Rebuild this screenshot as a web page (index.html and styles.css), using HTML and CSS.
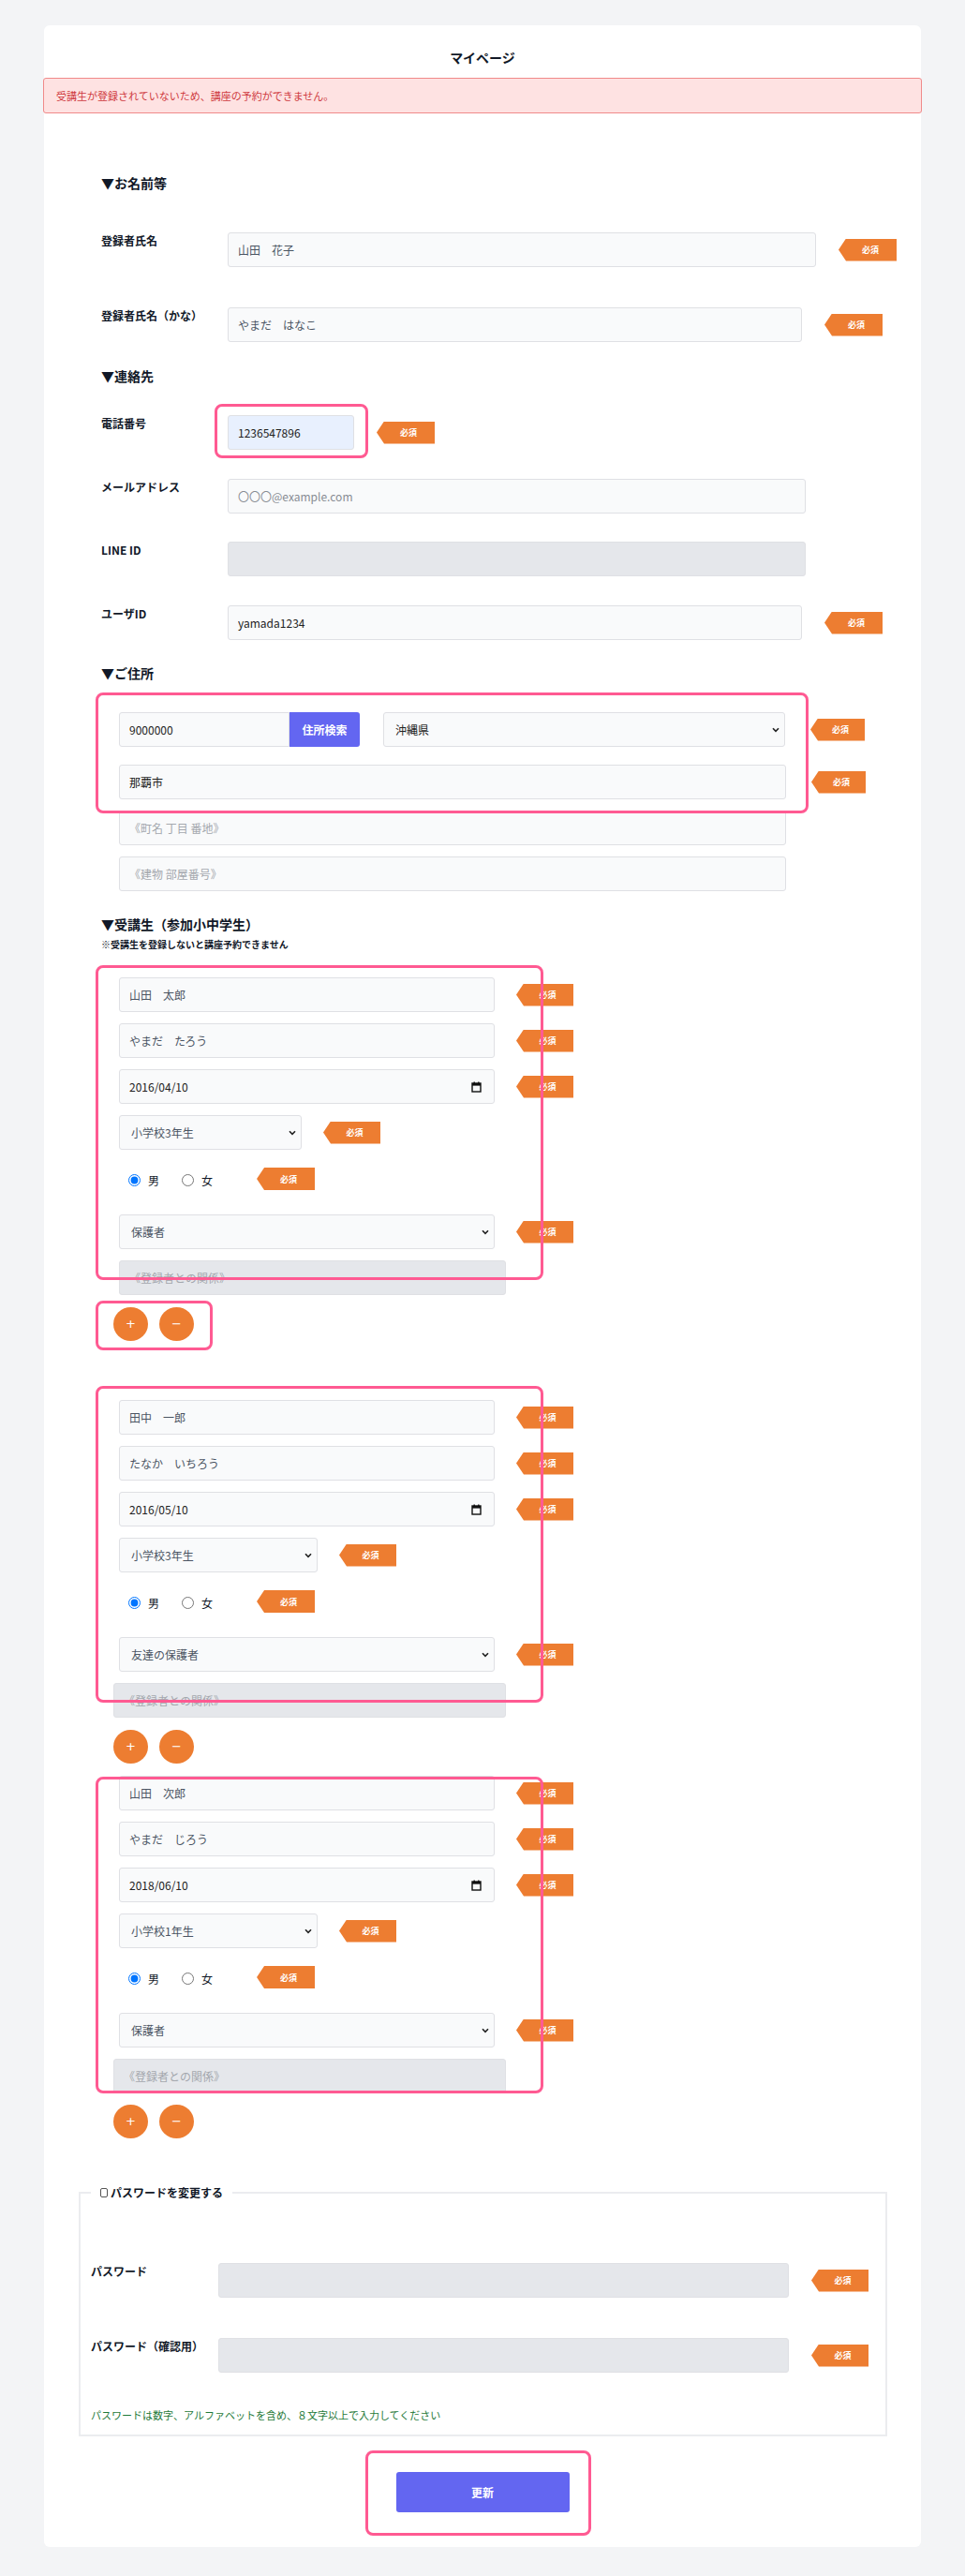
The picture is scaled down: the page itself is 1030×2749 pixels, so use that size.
FILE: index.html
```html
<!DOCTYPE html>
<html lang="ja">
<head>
<meta charset="utf-8">
<title>マイページ</title>
<link rel="stylesheet" href="styles.css">
</head>
<body>
<div class="card">
  <h1 class="title">マイページ</h1>
  <div class="alert">受講生が登録されていないため、講座の予約ができません。</div>

  <div class="form">
    <h2 class="h h-name">▼お名前等</h2>
    <div class="row mt43">
      <label class="lbl">登録者氏名</label>
      <input class="inp w628" value="山田　花子">
      <span class="badge">必須</span>
    </div>
    <div class="row mt43">
      <label class="lbl">登録者氏名（かな）</label>
      <input class="inp w613" value="やまだ　はなこ">
      <span class="badge">必須</span>
    </div>

    <h2 class="h mt26">▼連絡先</h2>
    <div class="row mt32">
      <label class="lbl">電話番号</label>
      <div class="hl-wrap">
        <input class="inp auto w135 dark" value="1236547896">
        <div class="hl hl-phone"></div>
      </div>
      <span class="badge">必須</span>
    </div>
    <div class="row mt31">
      <label class="lbl">メールアドレス</label>
      <input class="inp w617 muted" value="〇〇〇@example.com">
    </div>
    <div class="row mt30">
      <label class="lbl">LINE ID</label>
      <input class="inp gray w617" disabled>
    </div>
    <div class="row mt31">
      <label class="lbl">ユーザID</label>
      <input class="inp w613 dark" value="yamada1234">
      <span class="badge">必須</span>
    </div>

    <h2 class="h mt25">▼ご住所</h2>
    <div class="addr">
      <div class="hl hl-addr"></div>
      <div class="arow">
        <input class="inp zip dark" value="9000000">
        <button class="zipbtn" type="button">住所検索</button>
        <div class="sel-wrap w429 ml25">
          <select class="inp sel dark"><option>沖縄県</option></select>
          <svg class="chev" width="8" height="6" viewBox="0 0 8 6"><path d="M1 1.2 4 4.4 7 1.2" fill="none" stroke="#222" stroke-width="1.6"/></svg>
        </div>
        <span class="badge b58 ml27">必須</span>
      </div>
      <div class="arow mt19">
        <input class="inp w712 dark" value="那覇市">
        <span class="badge b58 ml27">必須</span>
      </div>
      <input class="inp w712 mt12" placeholder="《町名 丁目 番地》">
      <input class="inp w712 mt12" placeholder="《建物 部屋番号》">
    </div>

    <h2 class="h h-stu">▼受講生（参加小中学生）</h2>
    <p class="note">※受講生を登録しないと講座予約できません</p>

    <!-- student 1 -->
    <div class="stu mt27">
      <div class="hl hl-s1"></div>
      <div class="srow">
        <input class="inp w401" value="山田　太郎">
        <span class="badge sb">必須</span>
      </div>
      <div class="srow mt12">
        <input class="inp w401" value="やまだ　たろう">
        <span class="badge sb">必須</span>
      </div>
      <div class="srow mt12">
        <div class="inp date w401"><span>2016/04/10</span>
          <svg class="cal" width="11" height="12" viewBox="0 0 11 12"><rect x="1" y="2" width="9" height="9" fill="none" stroke="#111" stroke-width="1.4"/><rect x="1" y="2" width="9" height="2.6" fill="#111"/><rect x="2.5" y="0.5" width="1.4" height="2" fill="#111"/><rect x="7.1" y="0.5" width="1.4" height="2" fill="#111"/></svg>
        </div>
        <span class="badge sb">必須</span>
      </div>
      <div class="srow mt12">
        <div class="sel-wrap w195">
          <select class="inp sel"><option>小学校3年生</option></select>
          <svg class="chev" width="8" height="6" viewBox="0 0 8 6"><path d="M1 1.2 4 4.4 7 1.2" fill="none" stroke="#222" stroke-width="1.6"/></svg>
        </div>
        <span class="badge sb">必須</span>
      </div>
      <div class="radios">
        <input type="radio" name="g1" checked><span class="rl">男</span>
        <input type="radio" name="g1" class="r2"><span class="rl">女</span>
        <span class="badge rb">必須</span>
      </div>
      <div class="srow mt26">
        <div class="sel-wrap w401">
          <select class="inp sel"><option>保護者</option></select>
          <svg class="chev" width="8" height="6" viewBox="0 0 8 6"><path d="M1 1.2 4 4.4 7 1.2" fill="none" stroke="#222" stroke-width="1.6"/></svg>
        </div>
        <span class="badge sb">必須</span>
      </div>
      <input class="inp gray rel1 mt12" placeholder="《登録者との関係》" disabled>
    </div>
    <div class="pm mt13">
      <div class="hl hl-pm"></div>
      <button class="circ" type="button">+</button>
      <button class="circ" type="button">−</button>
    </div>

    <!-- student 2 -->
    <div class="stu mt63">
      <div class="hl hl-s2"></div>
      <div class="srow">
        <input class="inp w401" value="田中　一郎">
        <span class="badge sb">必須</span>
      </div>
      <div class="srow mt12">
        <input class="inp w401" value="たなか　いちろう">
        <span class="badge sb">必須</span>
      </div>
      <div class="srow mt12">
        <div class="inp date w401"><span>2016/05/10</span>
          <svg class="cal" width="11" height="12" viewBox="0 0 11 12"><rect x="1" y="2" width="9" height="9" fill="none" stroke="#111" stroke-width="1.4"/><rect x="1" y="2" width="9" height="2.6" fill="#111"/><rect x="2.5" y="0.5" width="1.4" height="2" fill="#111"/><rect x="7.1" y="0.5" width="1.4" height="2" fill="#111"/></svg>
        </div>
        <span class="badge sb">必須</span>
      </div>
      <div class="srow mt12">
        <div class="sel-wrap w212">
          <select class="inp sel"><option>小学校3年生</option></select>
          <svg class="chev" width="8" height="6" viewBox="0 0 8 6"><path d="M1 1.2 4 4.4 7 1.2" fill="none" stroke="#222" stroke-width="1.6"/></svg>
        </div>
        <span class="badge sb">必須</span>
      </div>
      <div class="radios">
        <input type="radio" name="g2" checked><span class="rl">男</span>
        <input type="radio" name="g2" class="r2"><span class="rl">女</span>
        <span class="badge rb">必須</span>
      </div>
      <div class="srow mt26">
        <div class="sel-wrap w401">
          <select class="inp sel"><option>友達の保護者</option></select>
          <svg class="chev" width="8" height="6" viewBox="0 0 8 6"><path d="M1 1.2 4 4.4 7 1.2" fill="none" stroke="#222" stroke-width="1.6"/></svg>
        </div>
        <span class="badge sb">必須</span>
      </div>
      <input class="inp gray rel2 mt12" placeholder="《登録者との関係》" disabled>
    </div>
    <div class="pm mt13">
      <button class="circ" type="button">+</button>
      <button class="circ" type="button">−</button>
    </div>

    <!-- student 3 -->
    <div class="stu mt13">
      <div class="hl hl-s3"></div>
      <div class="srow">
        <input class="inp w401" value="山田　次郎">
        <span class="badge sb">必須</span>
      </div>
      <div class="srow mt12">
        <input class="inp w401" value="やまだ　じろう">
        <span class="badge sb">必須</span>
      </div>
      <div class="srow mt12">
        <div class="inp date w401"><span>2018/06/10</span>
          <svg class="cal" width="11" height="12" viewBox="0 0 11 12"><rect x="1" y="2" width="9" height="9" fill="none" stroke="#111" stroke-width="1.4"/><rect x="1" y="2" width="9" height="2.6" fill="#111"/><rect x="2.5" y="0.5" width="1.4" height="2" fill="#111"/><rect x="7.1" y="0.5" width="1.4" height="2" fill="#111"/></svg>
        </div>
        <span class="badge sb">必須</span>
      </div>
      <div class="srow mt12">
        <div class="sel-wrap w212">
          <select class="inp sel"><option>小学校1年生</option></select>
          <svg class="chev" width="8" height="6" viewBox="0 0 8 6"><path d="M1 1.2 4 4.4 7 1.2" fill="none" stroke="#222" stroke-width="1.6"/></svg>
        </div>
        <span class="badge sb">必須</span>
      </div>
      <div class="radios">
        <input type="radio" name="g3" checked><span class="rl">男</span>
        <input type="radio" name="g3" class="r2"><span class="rl">女</span>
        <span class="badge rb">必須</span>
      </div>
      <div class="srow mt26">
        <div class="sel-wrap w401">
          <select class="inp sel"><option>保護者</option></select>
          <svg class="chev" width="8" height="6" viewBox="0 0 8 6"><path d="M1 1.2 4 4.4 7 1.2" fill="none" stroke="#222" stroke-width="1.6"/></svg>
        </div>
        <span class="badge sb">必須</span>
      </div>
      <input class="inp gray rel2 mt12" placeholder="《登録者との関係》" disabled>
    </div>
    <div class="pm mt12">
      <button class="circ" type="button">+</button>
      <button class="circ" type="button">−</button>
    </div>

    <fieldset class="pw">
      <legend class="pw-legend"><span class="chk"></span>パスワードを変更する</legend>
      <div class="row pwrow">
        <label class="lbl l136">パスワード</label>
        <input class="inp gray w609" type="password" disabled>
        <span class="badge b61">必須</span>
      </div>
      <div class="row mt43">
        <label class="lbl l136">パスワード（確認用）</label>
        <input class="inp gray w609" type="password" disabled>
        <span class="badge b61">必須</span>
      </div>
      <p class="hint">パスワードは数字、アルファベットを含め、８文字以上で入力してください</p>
    </fieldset>
  </div>

  <div class="submit">
    <div class="hl-wrap">
      <button class="update" type="button">更新</button>
      <div class="hl hl-upd"></div>
    </div>
  </div>
</div>
</body>
</html>
```

FILE: styles.css
```css
* { box-sizing: border-box; }

body {
  margin: 0;
  background: #f3f4f6;
  font-family: "Noto Sans CJK JP", "Noto Sans", sans-serif;
  color: #111827;
}

.card {
  margin: 27px 47px 29px;
  background: #fff;
  border-radius: 6px;
  padding: 24px 0 37px;
}

.title {
  margin: 0;
  text-align: center;
  font-size: 14px;
  font-weight: 700;
  line-height: 20px;
}

.alert {
  margin: 12px -1px 0;
  height: 38px;
  background: #fee2e2;
  border: 1px solid #f08a8a;
  border-radius: 3px;
  color: #cf3a40;
  font-size: 11px;
  display: flex;
  align-items: center;
  padding-left: 13px;
}

.form { padding-left: 61px; }

.h {
  margin: 0;
  font-size: 14px;
  font-weight: 700;
  line-height: 20px;
}
.h-name { margin-top: 64px; }
.h-stu { margin-top: 24px; font-size: 14px; line-height: 22px; }

.note {
  margin: 3px 0 0;
  font-size: 10px;
  font-weight: 700;
  line-height: 16px;
}

.row {
  display: flex;
  align-items: flex-start;
}

.lbl {
  flex: none;
  width: 135px;
  font-size: 12px;
  font-weight: 700;
  line-height: 18px;
}
.l136 { width: 136px; }

.inp {
  display: block;
  flex: none;
  height: 37px;
  border: 1px solid #dfe0e4;
  border-radius: 3px;
  background: #f9fafb;
  font: inherit;
  font-size: 12px;
  color: #4b5563;
  padding: 0 10px;
  margin: 0;
  outline: none;
}
.inp::placeholder { color: #a4a8ae; }
.inp.gray { background: #e5e7eb; }
.inp.auto { background: #e8f0fe; }
.inp.dark { color: #222; }
.inp.muted { color: #888c93; }

.w135 { width: 135px; }
.w195 { width: 195px; }
.w212 { width: 212px; }
.w401 { width: 401px; }
.w429 { width: 429px; }
.w609 { width: 609px; }
.w613 { width: 613px; }
.w617 { width: 617px; }
.w628 { width: 628px; }
.w712 { width: 712px; }

.mt12 { margin-top: 12px; }
.mt13 { margin-top: 13px; }
.mt19 { margin-top: 19px; }
.mt25 { margin-top: 25px; }
.mt26 { margin-top: 26px; }
.mt27 { margin-top: 27px; }
.mt30 { margin-top: 30px; }
.mt31 { margin-top: 31px; }
.mt32 { margin-top: 32px; }
.mt43 { margin-top: 43px; }
.mt63 { margin-top: 63px; }
.ml25 { margin-left: 25px; }
.ml27 { margin-left: 27px; }

.badge {
  flex: none;
  align-self: center;
  margin-left: 24px;
  width: 62px;
  height: 24px;
  background: #ed7d31;
  color: #fff;
  font-size: 9px;
  font-weight: 700;
  display: flex;
  align-items: center;
  justify-content: center;
  padding-left: 6px;
  clip-path: polygon(0 50%, 8px 0, 100% 0, 100% 100%, 8px 100%);
}
.badge.b58 { width: 58px; }
.badge.b61 { width: 61px; }
.badge.sb { width: 61px; margin-left: 23px; }
.badge.rb { width: 62px; margin-left: 47px; }
.badge.ml27 { margin-left: 27px; }

/* highlight overlays */
.hl-wrap { position: relative; }
.hl {
  position: absolute;
  border: 3px solid #ff5a92;
  border-radius: 8px;
  pointer-events: none;
  z-index: 2;
}
.hl-phone { left: -14px; top: -12px; width: 164px; height: 58px; }
.hl-addr { left: -25px; top: -21px; width: 761px; height: 129px; }
.hl-s1 { left: -25px; top: -13px; width: 478px; height: 336px; }
.hl-s2 { left: -25px; top: -15px; width: 478px; height: 338px; }
.hl-s3 { left: -25px; top: 1px; width: 478px; height: 338px; }
.hl-pm { left: -19px; top: -7px; width: 125px; height: 53px; }
.hl-upd { left: -33px; top: -23px; width: 241px; height: 91px; }

/* address */
.addr {
  position: relative;
  margin: 32px 0 0 19px;
}
.arow {
  display: flex;
  align-items: flex-start;
}
.zip {
  width: 182px;
  border-radius: 3px 0 0 3px;
}
.zipbtn {
  flex: none;
  width: 75px;
  height: 37px;
  border: none;
  border-radius: 0 3px 3px 0;
  background: #6366f1;
  color: #fff;
  font: inherit;
  font-size: 12px;
  font-weight: 700;
  padding: 0;
}

.sel-wrap {
  position: relative;
  flex: none;
}
.sel {
  width: 100%;
  appearance: none;
  -webkit-appearance: none;
  padding-left: 12px;
}
.chev {
  position: absolute;
  right: 6px;
  top: 16px;
}

/* students */
.stu {
  position: relative;
  margin-left: 19px;
}
.srow {
  display: flex;
  align-items: flex-start;
}
.date {
  display: flex;
  align-items: center;
  justify-content: space-between;
  color: #222;
  font-size: 12px;
  padding-right: 13px;
}
.cal { flex: none; }

.radios {
  display: flex;
  align-items: center;
  height: 24px;
  margin-top: 19px;
  padding-left: 10px;
}
.radios input {
  margin: 3px 0 0 0;
  width: 13px;
  height: 13px;
}
.radios .r2 { margin-left: 24px; }
.rl {
  margin-left: 8px;
  font-size: 12px;
  line-height: 18px;
  margin-top: 3px;
}

.rel1 { width: 413px; }
.rel2 { width: 419px; margin-left: -6px; }

.pm {
  position: relative;
  display: flex;
  gap: 12px;
  margin-left: 13px;
}
.circ {
  width: 37px;
  height: 36px;
  border: none;
  border-radius: 50%;
  background: #ed7d31;
  color: #fff;
  font-family: "DejaVu Sans", sans-serif;
  font-size: 13px;
  padding: 0;
  line-height: 36px;
}

/* password fieldset */
.pw {
  margin: 49px 0 0 -24px;
  width: 863px;
  border: 2px solid #ebecef;
  padding: 0 11px 13px;
}
.pw-legend {
  padding: 0 10px;
  font-size: 12px;
  font-weight: 700;
  line-height: 18px;
  display: flex;
  align-items: center;
}
.chk {
  display: inline-block;
  width: 8px;
  height: 10px;
  border: 1px solid #555;
  border-radius: 2px;
  margin-right: 3px;
}
.pwrow { margin-top: 66px; }
.hint {
  margin: 37px 0 0;
  font-size: 11px;
  line-height: 16px;
  color: #1f7a3a;
}

.submit {
  display: flex;
  justify-content: center;
  margin-top: 38px;
}
.update {
  display: block;
  width: 185px;
  height: 43px;
  border: none;
  border-radius: 3px;
  background: #6366f1;
  color: #fff;
  font: inherit;
  font-size: 12px;
  font-weight: 700;
}
```
